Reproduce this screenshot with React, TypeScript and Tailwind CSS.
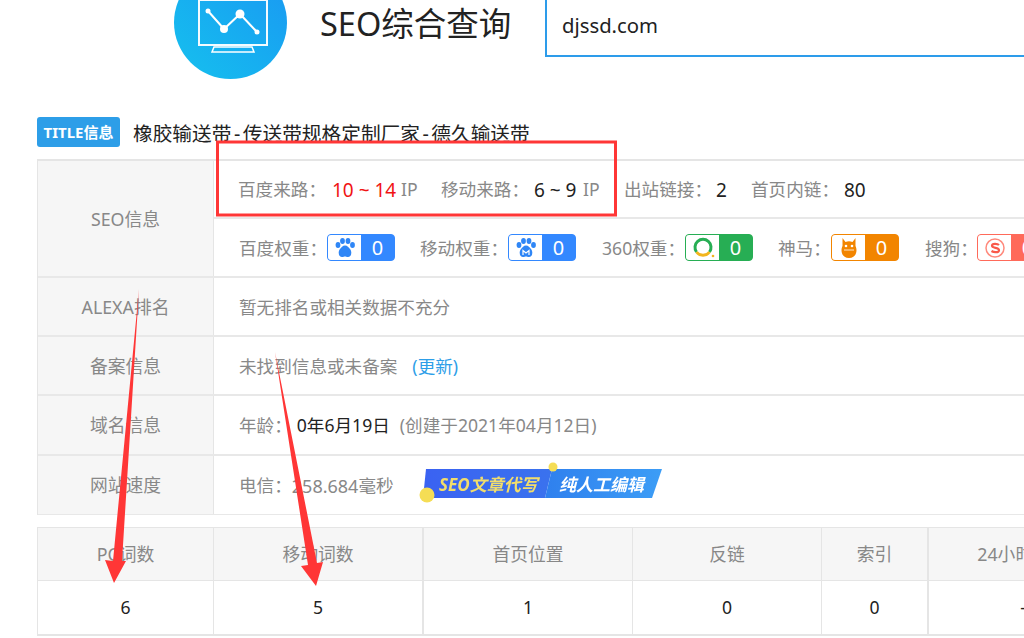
const Cell = ({ children, w, head, last, thick }: { children: React.ReactNode; w: string; head?: boolean; last?: boolean; thick?: boolean }) => (
  <div className={`${w} shrink-0 h-full flex items-center justify-center border-[#e5e5e5] ${thick ? "border-r-2" : "border-r"} ${head ? "bg-[#f6f6f6] text-[#888888] text-[17.800px] pt-[2px]" : "bg-white text-[#222222]"} ${last ? "border-r-0" : ""}`}>
    {children}
  </div>
);

const Row = ({ label, children, h }: { label: string; children: React.ReactNode; h: string }) => (
  <div className={`flex ${h} border-b-2 border-[#e8e8e8] last:border-b`}>
    <div className="w-[176px] shrink-0 flex items-center justify-center pt-[2px] bg-[#f6f6f6] text-[#888888] text-[17.800px] border-r border-[#e5e5e5]">{label}</div>
    <div className="flex-1 flex items-center pl-[25px] pt-[2px] text-[#888888] whitespace-nowrap">{children}</div>
  </div>
);

const Paw = ({ m }: { m?: boolean }) => (
  <svg width="24" height="22" viewBox="0 0 24 22" fill="#2f86f6">
    <ellipse cx="5" cy="8" rx="2.400" ry="3" />
    <ellipse cx="9.500" cy="4" rx="2.400" ry="3" />
    <ellipse cx="15" cy="4" rx="2.400" ry="3" />
    <ellipse cx="19.500" cy="8" rx="2.400" ry="3" />
    <path d="M12 8.500c-2.500 0-3.500 2-5 3.500C5 14 5 20 9 20c1.500 0 2-.5 3-.5s1.500.5 3 .5c4 0 4-6 2-8-1.500-1.500-2.500-3.500-5-3.500z" />
    {m && <path d="M9 18v-4.500l3 2.500 3-2.500V18" fill="none" stroke="#fff" strokeWidth="1.200" />}
  </svg>
);

const Ring = () => (
  <svg width="24" height="22" viewBox="0 0 24 22" fill="none">
    <path d="M5.500 15a8 8 0 1 1 13 0" stroke="#27ae54" strokeWidth="3" />
    <path d="M5.500 15a8 8 0 0 0 13 0" stroke="#f2b51d" strokeWidth="3" />
    <circle cx="22" cy="19" r="1.300" fill="#f2b51d" />
  </svg>
);

const Cat = () => (
  <svg width="24" height="22" viewBox="0 0 24 22" fill="#f28500">
    <path d="M5.500 1l3 4c2.500-1 4.500-1 7 0l3-4v8c2 3.500 1.500 12-6.500 12S3.500 12.500 5.500 9z" />
    <circle cx="9" cy="9" r="1.300" fill="#fff" />
    <circle cx="15" cy="9" r="1.300" fill="#fff" />
    <path d="M7 13h10" stroke="#fff" strokeWidth="0.800" />
  </svg>
);

const Sogou = () => (
  <svg width="24" height="22" viewBox="0 0 24 22" fill="none">
    <circle cx="12" cy="11" r="9" stroke="#ff8a7d" strokeWidth="1.500" />
    <path d="M16 8c-1.500-1.500-7-2-7 .8 0 2.700 7 1.500 7 4.400 0 2.800-5.500 2.300-7.500.8" stroke="#f9594a" strokeWidth="2.200" />
  </svg>
);

const Badge = ({ icon, border, bg, value = "0" }: { icon: React.ReactNode; border: string; bg: string; value?: string }) => (
  <span className={`inline-flex w-[68px] h-[27px] shrink-0 rounded-[4px] border overflow-hidden ${border} ${bg}`}>
    <span className="w-[33px] bg-white flex items-center justify-center">{icon}</span>
    <span className="flex-1 flex items-center justify-center text-white text-[20px] leading-none">{value}</span>
  </span>
);

const Banner = () => (
  <svg width="245" height="40" viewBox="0 0 245 40" className="ml-[26px] mt-[-4px] shrink-0 overflow-visible blur-[0.400px]">
    <defs>
      <linearGradient id="bl" x1="0" x2="1" y1="0" y2="0">
        <stop offset="0" stopColor="#3a62f2" />
        <stop offset="1" stopColor="#3a72ee" />
      </linearGradient>
      <linearGradient id="br" x1="0" x2="1" y1="0" y2="0">
        <stop offset="0" stopColor="#2f80ee" />
        <stop offset="1" stopColor="#3c9df6" />
      </linearGradient>
    </defs>
    <polygon points="6,5 132,5 125,34 3,34" fill="url(#bl)" />
    <polygon points="132,5 242,5 232,34 125,34" fill="url(#br)" />
    <circle cx="133" cy="3" r="4.500" fill="#f5dd55" />
    <circle cx="7" cy="31" r="7.500" fill="#f5dd55" />
    <text x="19" y="27" fill="#f2dd6b" fontSize="17" fontWeight="700" fontStyle="italic" fontFamily="Noto Sans, Noto Sans CJK SC, sans-serif">SEO文章代写</text>
    <text x="139" y="27" fill="#ffffff" fontSize="17" fontWeight="700" fontStyle="italic" fontFamily="Noto Sans, Noto Sans CJK SC, sans-serif">纯人工编辑</text>
  </svg>
);

export default function App() {
  return (
    <div className="relative w-[1024px] h-[638px] overflow-hidden bg-white text-[17.600px] leading-none font-['Noto_Sans','Noto_Sans_CJK_SC',sans-serif]">
      <div className="flex h-[79px] pl-[174px]">
        <div className="w-[113px] h-[113px] mt-[-34px] shrink-0 rounded-full bg-gradient-to-tr from-[#17c0ee] to-[#1b97f2] flex items-center justify-center">
          <svg width="113" height="113" viewBox="0 0 113 113" fill="none">
            <rect x="25" y="34" width="68" height="45" stroke="#fff" strokeWidth="2" opacity="0.950" />
            <path d="M40 81h38l2 5H38z" stroke="#fff" strokeWidth="1.500" />
            <path d="M34 45l16 18 16-15 17 18" stroke="#fff" strokeWidth="2" />
            <circle cx="34" cy="45" r="2.500" fill="#fff" />
            <circle cx="50" cy="63" r="4" fill="#fff" />
            <circle cx="66" cy="48" r="4.500" fill="#fff" />
            <circle cx="83" cy="66" r="2.500" fill="#fff" />
          </svg>
        </div>
        <div className="ml-[33px] h-[48px] flex items-center text-[32.500px] text-[#222222] w-[225px]">SEO综合查询</div>
        <div className="flex-1 h-[57px] border-l-2 border-b-2 border-[#2d9cea] pl-[15px] flex items-center text-[20.300px] text-[#222222] pb-[5px]">djssd.com</div>
      </div>

      <div className="flex items-center h-[30px] mt-[38px] ml-[37px]">
        <span className="w-[83px] h-[30px] rounded-[3px] bg-[#2d9ee8] text-white text-[15px] font-bold flex items-center justify-center">TITLE信息</span>
        <span className="ml-[13px] pt-[4px] text-[19.700px] text-[#222222]">橡胶输送带<span className="mx-[2.500px]">-</span>传送带规格定制厂家<span className="mx-[2.500px]">-</span>德久输送带</span>
      </div>

      <div className="ml-[37px] mt-[12px] w-[1100px] border-t-2 border-l border-[#e5e5e5]">
        <div className="flex h-[117px] border-b-2 border-[#e8e8e8]">
          <div className="w-[176px] shrink-0 flex items-center justify-center pt-[2px] bg-[#f6f6f6] text-[#888888] text-[17.800px] border-r border-[#e5e5e5]">SEO信息</div>
          <div className="flex-1 flex flex-col text-[#888888] whitespace-nowrap">
            <div className="h-[58px] border-b-2 border-[#e8e8e8] flex items-center pl-[24px] pt-[2px]">
              <span className="w-[94px]">百度来路：</span>
              <span className="w-[63px] text-[19px] text-[#f01414]">10 ~ 14</span>
              <span className="ml-[6px] w-[40px]">IP</span>
              <span className="w-[93px]">移动来路：</span>
              <span className="w-[43px] text-[19px] text-[#222222]">6 ~ 9</span>
              <span className="ml-[6px] w-[41px]">IP</span>
              <span className="w-[92px]">出站链接：</span>
              <span className="text-[19px] text-[#222222] w-[35px]">2</span>
              <span className="w-[93px]">首页内链：</span>
              <span className="text-[19px] text-[#222222]">80</span>
            </div>
            <div className="flex-1 flex items-center pl-[25px]">
              <span className="w-[88px] pt-[2px]">百度权重：</span>
              <Badge icon={<Paw />} border="border-[#3388ff]" bg="bg-[#3388ff]" />
              <span className="ml-[25px] w-[88px] pt-[2px]">移动权重：</span>
              <Badge icon={<Paw m />} border="border-[#3388ff]" bg="bg-[#3388ff]" />
              <span className="ml-[26px] w-[83px] pt-[2px]">360权重：</span>
              <Badge icon={<Ring />} border="border-[#27ae54]" bg="bg-[#27ae54]" />
              <span className="ml-[25px] w-[53px] pt-[2px]">神马：</span>
              <Badge icon={<Cat />} border="border-[#f28500]" bg="bg-[#f28500]" />
              <span className="ml-[26px] w-[52px] pt-[2px]">搜狗：</span>
              <Badge icon={<Sogou />} border="border-[#ff6a5a]" bg="bg-[#ff6a5a]" />
            </div>
          </div>
        </div>
        <Row label="ALEXA排名" h="h-[59px]">暂无排名或相关数据不充分</Row>
        <Row label="备案信息" h="h-[59px]">
          未找到信息或未备案<span className="ml-[15px] text-[#2d9ee8]">(更新)</span>
        </Row>
        <Row label="域名信息" h="h-[60px]">
          年龄：<span className="ml-[5px] text-[#222222]">0年6月19日</span><span className="ml-[10px]">(创建于2021年04月12日)</span>
        </Row>
        <Row label="网站速度" h="h-[59px]">
          电信：<span className="text-[18px]">258.684</span>毫秒<Banner />
        </Row>
      </div>

      <div className="ml-[37px] mt-[12px] w-[1100px] border border-[#e5e5e5] border-b-2">
        <div className="flex h-[53px] border-b border-[#e5e5e5]">
          <Cell w="w-[176px]" head>PC词数</Cell>
          <Cell w="w-[210px]" head thick>移动词数</Cell>
          <Cell w="w-[209px]" head>首页位置</Cell>
          <Cell w="w-[189px]" head>反链</Cell>
          <Cell w="w-[107px]" head thick>索引</Cell>
          <Cell w="w-[188px]" head last>24小时收录</Cell>
        </div>
        <div className="flex h-[53px]">
          <Cell w="w-[176px]">6</Cell>
          <Cell w="w-[210px]" thick>5</Cell>
          <Cell w="w-[209px]">1</Cell>
          <Cell w="w-[189px]">0</Cell>
          <Cell w="w-[107px]" thick>0</Cell>
          <Cell w="w-[188px]" last>-</Cell>
        </div>
      </div>

      <svg className="absolute inset-0 pointer-events-none" width="1024" height="638" viewBox="0 0 1024 638" fill="none">
        <rect x="217.500" y="142" width="398" height="73" stroke="#ff3636" strokeWidth="3" />
        <polygon points="139,289 122,561 126,561 114,583 105,560 113,561" fill="#ff3636" />
        <polygon points="275,352 317,563 323,562 316,586 301,566 308,565" fill="#ff3636" />
      </svg>
    </div>
  );
}
